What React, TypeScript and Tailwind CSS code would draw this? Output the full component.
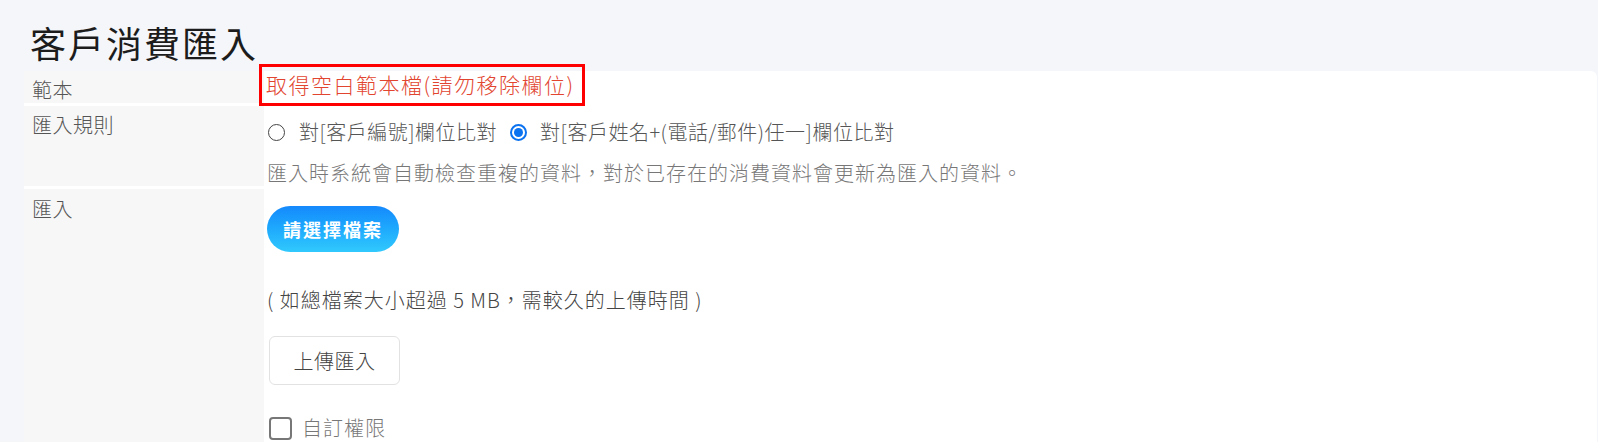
// App.tsx - 客戶消費匯入 page.
import React from "react";

const Label = ({ text, h }: { text: string; h?: string }) => (
    <div
        className={`bg-[#f7f7f7] pl-[8px] text-[20px] font-light leading-[28px] tracking-[0.5px] text-[#555] ${h ?? ""}`}
    >
        {text}
    </div>
);

const Radio = ({ checked }: { checked?: boolean }) =>
    checked ? (
        <span className="flex h-[17px] w-[17px] shrink-0 items-center justify-center rounded-full border-2 border-[#0b72f0] bg-white">
            <span className="h-[9px] w-[9px] rounded-full bg-[#0b72f0]" />
        </span>
    ) : (
        <span className="h-[17px] w-[17px] shrink-0 rounded-full border-[1.5px] border-[#444] bg-white" />
    );

const App = () => {
    return (
        <div className="min-h-screen bg-[#f5f6fa] font-['Noto_Sans_CJK_TC','Noto_Sans',sans-serif]">
            {/* 標題 */}
            <h1 className="h-[71px] pl-[30px] pt-[20px] text-[36px] leading-[44px] tracking-[2px] text-[#1c1c1c]">
                客戶消費匯入
            </h1>

            {/* 表單 */}
            <div className="ml-[24px] mr-[1px] grid grid-cols-[240px_1fr] gap-y-[3px] rounded-tr-[6px] bg-white">
                {/* 範本 */}
                <Label text="範本" h="h-[32px] pt-[5px]" />
                <div className="h-[32px]">
                    <span className="-ml-[2px] -mt-[4px] inline-block h-[36px] whitespace-nowrap pl-[4px] pr-[7px] align-top text-[21px] font-light leading-[34px] tracking-[1.5px] text-[#e2452f] outline-[3px] outline-[#ff0000]">
                        取得空白範本檔(請勿移除欄位)
                    </span>
                </div>

                {/* 匯入規則 */}
                <Label text="匯入規則" h="h-[80px] pt-[5px]" />
                <div className="h-[80px] pl-[4px] pt-[12px]">
                    <div className="flex h-[28px] items-center text-[20px] font-light tracking-[0.5px] text-[#555]">
                        <Radio />
                        <span className="ml-[14px]">對[客戶編號]欄位比對</span>
                        <span className="ml-[13px]">
                            <Radio checked />
                        </span>
                        <span className="ml-[13px]">對[客戶姓名+(電話/郵件)任一]欄位比對</span>
                    </div>
                    <p className="-ml-[1px] mt-[15px] text-[20px] font-light leading-[24px] tracking-[1px] text-[#777]">
                        匯入時系統會自動檢查重複的資料，對於已存在的消費資料會更新為匯入的資料。
                    </p>
                </div>

                {/* 匯入 */}
                <Label text="匯入" h="h-[260px] pt-[6px]" />
                <div className="flex flex-col items-start pl-[3px] pt-[17px]">
                    <button className="h-[46px] w-[132px] rounded-full bg-linear-to-b from-[#1689fc] to-[#31c9fd] text-[18px] font-bold tracking-[2px] text-white">
                        請選擇檔案
                    </button>
                    <p className="mt-[34px] text-[20px] font-light leading-[28px] tracking-[1px] text-[#444]">
                        ( 如總檔案大小超過 5 MB，需較久的上傳時間 )
                    </p>
                    <button className="ml-[2px] mt-[22px] h-[49px] w-[131px] rounded-[6px] border border-[#e2e2e2] bg-white text-[20px] font-light tracking-[0.5px] text-[#444]">
                        上傳匯入
                    </button>
                    <label className="ml-[2px] mt-[31px] flex items-center">
                        <span className="h-[23px] w-[23px] rounded-[4px] border-2 border-[#777] bg-white" />
                        <span className="ml-[10px] text-[20px] font-light leading-[24px] tracking-[1px] text-[#777]">
                            自訂權限
                        </span>
                    </label>
                </div>
            </div>
        </div>
    );
};

export default App;
